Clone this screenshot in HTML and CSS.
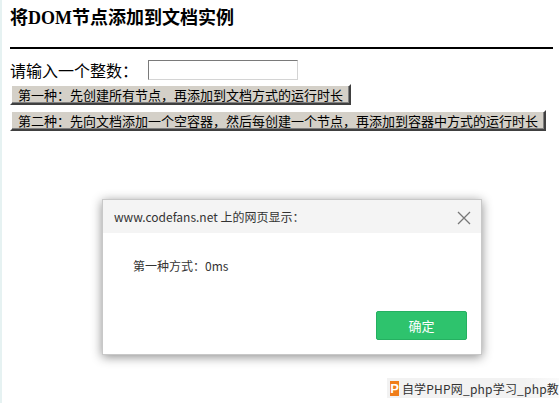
FILE: index.html
```html
<!DOCTYPE html>
<html lang="zh">
<head>
    <meta charset="UTF-8">
    <title>将DOM节点添加到文档实例</title>
    <link rel="stylesheet" href="styles.css">
</head>
<body>
    <div class="page">
        <h2 class="title">将DOM节点添加到文档实例</h2>
        <div class="rule"></div>
        <div class="field">
            <label for="num">请输入一个整数：</label>
            <input type="text" id="num" class="num">
        </div>
        <div class="actions">
            <button class="old-btn">第一种：先创建所有节点，再添加到文档方式的运行时长</button>
            <button class="old-btn">第二种：先向文档添加一个空容器，然后每创建一个节点，再添加到容器中方式的运行时长</button>
        </div>
    </div>

    <div class="dialog">
        <div class="dialog-head">
            <span>www.codefans.net 上的网页显示：</span>
            <svg class="close" width="14" height="14" viewBox="0 0 14 14">
                <path d="M1 1 L13 13 M13 1 L1 13" stroke="#777" stroke-width="1.3" fill="none"/>
            </svg>
        </div>
        <div class="dialog-body">第一种方式：0ms</div>
        <div class="dialog-foot">
            <button class="ok">确定</button>
        </div>
    </div>

    <div class="watermark">
        <span class="logo">P</span>
        <span class="wm-text">自学PHP网_php学习_php教</span>
    </div>
</body>
</html>
```

FILE: styles.css
```css
* {
    box-sizing: border-box;
}
html {
    background: #fff;
    border-left: 2px solid #e6f2f2;
    height: 100%;
}
body {
    margin: 0 6px 0 8px;
    font-family: "Noto Sans CJK SC", sans-serif;
    color: #000;
}
.title {
    margin: 0;
    padding-top: 6px;
    font-size: 18px;
    line-height: 24px;
    font-weight: bold;
    font-family: "Liberation Serif", "Noto Sans CJK SC", serif;
}
.rule {
    margin-top: 17px;
    border-top: 2px solid #000;
}
.field {
    display: flex;
    align-items: center;
    gap: 10px;
    margin-top: 11px;
}
.field label {
    font-size: 16px;
    line-height: 20px;
}
.num {
    width: 150px;
    height: 20px;
    border: 1px solid #7a7a7a;
    border-right-color: #d4d4d4;
    border-bottom-color: #d4d4d4;
    padding: 0;
    font-size: 13px;
}
.actions {
    display: flex;
    flex-direction: column;
    align-items: flex-start;
    gap: 5px;
    margin-top: 4px;
}
.old-btn {
    background: #d4d0c8;
    border: 2px solid;
    border-color: #fff #404040 #404040 #fff;
    box-shadow: inset -1px -1px 0 #808080;
    font-family: "Noto Sans CJK SC", sans-serif;
    font-size: 13px;
    line-height: 17px;
    padding: 0 6px;
    height: 21px;
    color: #000;
    white-space: nowrap;
}
.dialog {
    position: absolute;
    left: 102px;
    top: 199px;
    width: 380px;
    height: 156px;
    background: #fff;
    border: 1px solid #c8c8c8;
    box-shadow: 0 2px 10px rgba(0, 0, 0, 0.45);
    display: flex;
    flex-direction: column;
}
.dialog-head {
    background: #f4f4f4;
    height: 33px;
    display: flex;
    align-items: center;
    justify-content: space-between;
    padding: 0 10px 0 11px;
    font-size: 12px;
    color: #333;
}
.dialog-head .close {
    margin-top: 2px;
}
.dialog-body {
    padding: 25px 0 0 30px;
    font-size: 12px;
    line-height: 16px;
    color: #333;
    flex: 1;
}
.dialog-foot {
    display: flex;
    justify-content: flex-end;
    padding: 0 14px 14px 0;
}
.ok {
    width: 91px;
    height: 29px;
    background: #2ec36d;
    border: 1px solid #25b061;
    border-radius: 2px;
    color: #fff;
    font-family: "Noto Sans CJK SC", sans-serif;
    font-size: 13px;
}
.watermark {
    position: absolute;
    right: 0;
    bottom: 5px;
    width: 172px;
    height: 20px;
    display: flex;
    align-items: center;
    gap: 3px;
    padding-left: 3px;
    background: linear-gradient(to right, #f2f2f2 80%, #fafafa);
    font-size: 12px;
    color: #333;
    white-space: nowrap;
}
.wm-text {
    letter-spacing: 0.2px;
}
.logo {
    display: inline-flex;
    align-items: center;
    justify-content: center;
    width: 15px;
    height: 15px;
    background: #f07d1a;
    color: #fff;
    font-family: "Liberation Sans", sans-serif;
    font-weight: bold;
    font-size: 13px;
}
```
